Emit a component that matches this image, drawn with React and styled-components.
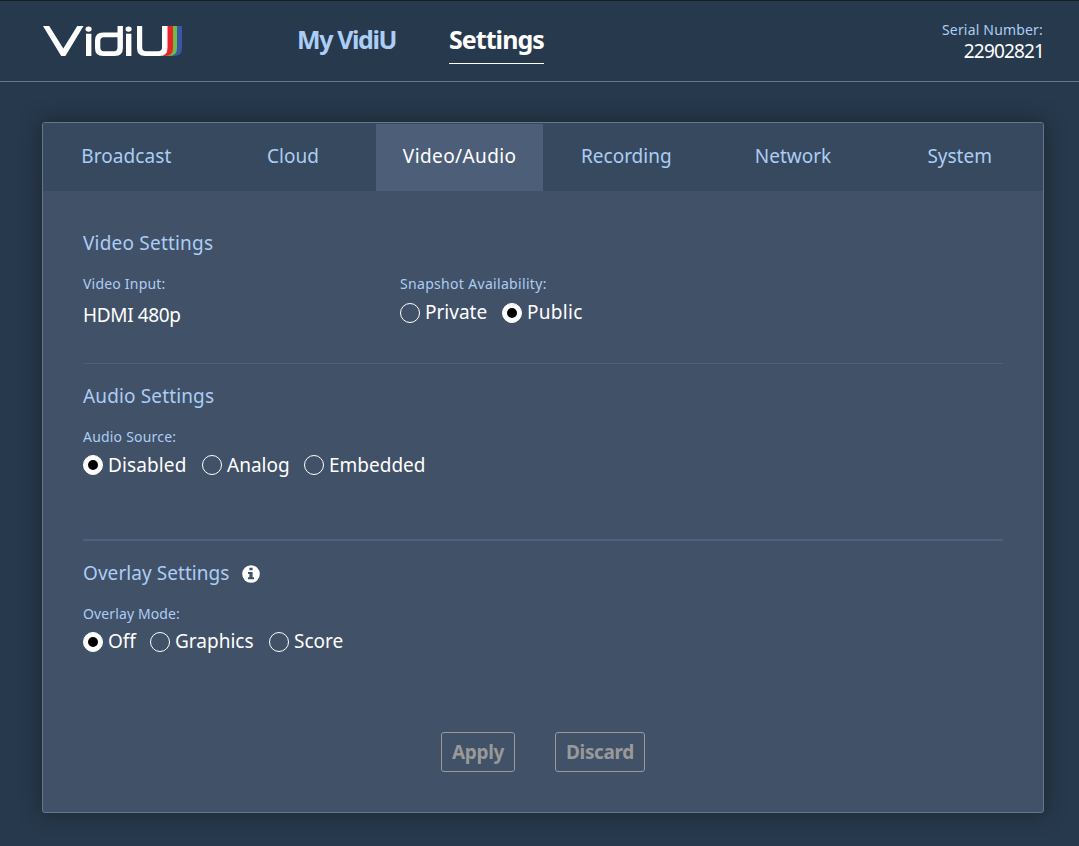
import React from 'react';
import styled, { createGlobalStyle } from 'styled-components';

const color = {
  page: '#27394d',
  line: '#66768c',
  link: '#accdf5',
  text: '#ffffff',
  panel: '#415167',
  tabs: '#37495e',
  tabActive: '#4d5f78',
  divider: '#4c6180',
  disabled: '#999999',
};

const GlobalStyle = createGlobalStyle`
  * { box-sizing: border-box; }
  body {
    margin: 0;
    background: ${color.page};
    color: ${color.text};
    font: 400 19px/30px "Noto Sans", "Open Sans", sans-serif;
  }
`;

const Page = styled.div`
  min-height: 846px;
  border-top: 1px solid #171c22;
  background: ${color.page};
`;

const Header = styled.header`
  display: flex;
  align-items: flex-start;
  height: 81px;
  padding: 0 36px 0 43px;
  border-bottom: 1px solid ${color.line};
`;

const Logo = styled.svg`
  display: block;
  width: 140px;
  height: 30px;
  margin-top: 25px;
`;

const MainNav = styled.nav`
  display: flex;
  gap: 53px;
  margin: 23px auto 0 114px;
`;

const NavLink = styled.a`
  width: ${(p) => p.$width}px;
  height: 40px;
  border-bottom: 1px solid ${(p) => (p.$active ? color.text : 'transparent')};
  color: ${(p) => (p.$active ? color.text : color.link)};
  font-size: 25px;
  font-weight: 700;
  line-height: 30px;
  letter-spacing: ${(p) => p.$track}px;
  white-space: nowrap;
`;

const Serial = styled.div`
  margin-top: 18px;
  text-align: right;
`;

const SerialLabel = styled.div`
  color: ${color.link};
  font-size: 14px;
  line-height: 21px;
  letter-spacing: 0.18px;
`;

const SerialValue = styled.div`
  margin-right: -1px;
  line-height: 23px;
  letter-spacing: -0.85px;
`;

const Panel = styled.main`
  width: 1002px;
  height: 691px;
  margin: 40px 0 0 42px;
  border: 1px solid ${color.line};
  border-radius: 3px;
  background: ${color.panel};
  box-shadow: 0 0 20px rgba(24, 31, 30, 0.75);
  overflow: hidden;
`;

const Tabs = styled.nav`
  display: grid;
  grid-template-columns: repeat(6, 1fr);
  height: 68px;
  padding-top: 1px;
  background: ${color.tabs};
`;

const Tab = styled.a`
  padding-bottom: 3px;
  background: ${(p) => (p.$active ? color.tabActive : 'transparent')};
  color: ${(p) => (p.$active ? color.text : color.link)};
  line-height: 64px;
  letter-spacing: ${(p) => p.$track || 0}px;
  text-align: center;
`;

const Body = styled.div`
  padding: 37px 40px 0;
`;

const Section = styled.section`
  height: ${(p) => p.$height}px;
  padding-top: ${(p) => p.$top || 0}px;
  border-bottom: ${(p) => p.$rule || 0}px solid ${color.divider};
`;

const SectionTitle = styled.h2`
  display: flex;
  align-items: center;
  gap: 12px;
  margin: 0 0 16px;
  color: ${color.link};
  font-size: 19px;
  font-weight: 400;
  line-height: 30px;
  letter-spacing: ${(p) => p.$track || 0.14}px;
`;

const InfoIcon = styled.svg`
  display: block;
  width: 18px;
  height: 18px;
  margin-top: 1px;
`;

const Fields = styled.div`
  display: grid;
  grid-template-columns: 317px 1fr;
`;

const Label = styled.div`
  color: ${color.link};
  font-size: 14px;
  line-height: 20px;
  letter-spacing: ${(p) => p.$track || 0.2}px;
`;

const Value = styled.div`
  margin-top: 6px;
  letter-spacing: -0.35px;
`;

const Options = styled.div`
  display: flex;
  gap: 15px;
  margin-top: ${(p) => p.$top || 8}px;
`;

const Option = styled.label`
  display: flex;
  gap: 5px;
  height: 20px;
  line-height: ${(p) => p.$line || 20}px;
`;

const Radio = styled.span`
  display: grid;
  place-items: center;
  width: 20px;
  height: 20px;
  border: 1px solid ${color.text};
  border-radius: 50%;
  background: ${(p) => (p.$checked ? color.text : 'transparent')};

  &::after {
    content: '';
    width: 10px;
    height: 10px;
    border-radius: 50%;
    background: ${(p) => (p.$checked ? '#000' : 'transparent')};
  }
`;

const OptionText = styled.span`
  width: ${(p) => p.$width}px;
  letter-spacing: ${(p) => p.$track || 0}px;
  white-space: nowrap;
`;

const Actions = styled.div`
  display: flex;
  justify-content: center;
  gap: 40px;
`;

const Button = styled.button`
  width: ${(p) => p.$width}px;
  height: 40px;
  padding: 0;
  border: 1px solid ${color.disabled};
  border-radius: 3px;
  background: transparent;
  color: ${color.disabled};
  font: 700 19px/38px "Noto Sans", "Open Sans", sans-serif;
  letter-spacing: -0.35px;
`;

const TABS = [
  { name: 'Broadcast', track: 0.08 },
  { name: 'Cloud' },
  { name: 'Video/Audio', track: 0.4, active: true },
  { name: 'Recording' },
  { name: 'Network' },
  { name: 'System' },
];

function RadioGroup({ options, value, top, line }) {
  return (
    <Options $top={top}>
      {options.map(([name, width, track]) => (
        <Option key={name} $line={line}>
          <Radio $checked={name === value} />
          <OptionText $width={width} $track={track}>{name}</OptionText>
        </Option>
      ))}
    </Options>
  );
}

function VidiULogo() {
  return (
    <Logo viewBox="43 26 140 30" aria-label="VidiU">
      <path d="M176 26h6v22q0 8-8 8h-5q7-2 7-9z" fill="#3a56a5" />
      <path d="M172 26h5v22q0 8-8 8h-5q8-2 8-9z" fill="#6cbd45" />
      <path d="M167 26h6v22q0 8-8 8h-6q8-2 8-9z" fill="#e8232a" />
      <path d="M162 26h5.500v22q0 8-8 8H145q-8 0-8-8V26h5.200v21.500q0 3.800 3.800 3.800h12.200q3.800 0 3.800-3.800z" fill="#fff" />
      <path d="M43 26h6.200L63.300 48.400 77.300 26h6.200L65.400 56h-4.200z" fill="#fff" />
      <path d="M86 33.800h5.400V56H86zM126 33.800h5.400V56H126z" fill="#fff" />
      <ellipse cx="88.6" cy="29.1" rx="3.1" ry="2.7" fill="#fff" />
      <ellipse cx="128.6" cy="29.1" rx="3.1" ry="2.7" fill="#fff" />
      <path d="M117.500 26h5.400v22q0 8-8 8H103q-8 0-8-8v-7.500q0-8 8-8h14.500zM117.500 37.200H104q-3.700 0-3.700 3.700v6.700q0 3.700 3.700 3.700h9.800q3.700 0 3.700-3.700z" fill="#fff" fillRule="evenodd" />
    </Logo>
  );
}

export default function App() {
  return (
    <>
      <GlobalStyle />
      <Page>
        <Header>
          <VidiULogo />
          <MainNav>
            <NavLink $width={99} $track={-1.4}>My VidiU</NavLink>
            <NavLink $width={95} $track={-0.95} $active>Settings</NavLink>
          </MainNav>
          <Serial>
            <SerialLabel>Serial Number:</SerialLabel>
            <SerialValue>22902821</SerialValue>
          </Serial>
        </Header>
        <Panel>
          <Tabs>
            {TABS.map((tab) => (
              <Tab key={tab.name} $active={tab.active} $track={tab.track}>{tab.name}</Tab>
            ))}
          </Tabs>
          <Body>
            <Section $height={136} $rule={1}>
              <SectionTitle $track={0.2}>Video Settings</SectionTitle>
              <Fields>
                <div>
                  <Label>Video Input:</Label>
                  <Value>HDMI 480p</Value>
                </div>
                <div>
                  <Label $track={0.32}>Snapshot Availability:</Label>
                  <RadioGroup options={[['Private', 62], ['Public', 55, 0.3]]} value="Public" top={9} line={18} />
                </div>
              </Fields>
            </Section>
            <Section $height={177} $top={17} $rule={2}>
              <SectionTitle>Audio Settings</SectionTitle>
              <Label>Audio Source:</Label>
              <RadioGroup options={[['Disabled', 79, 0.12], ['Analog', 62], ['Embedded', 97]]} value="Disabled" />
            </Section>
            <Section $height={191} $top={17}>
              <SectionTitle $track={0.06}>
                Overlay Settings
                <InfoIcon viewBox="0 0 18 18">
                  <circle cx="9" cy="9" r="8.8" fill="#fff" />
                  <path d="M7.400 2.700h3.200v2.600H7.400zM6 7h4.600v5.300H12v2H6v-2h1.400V9H6z" fill={color.panel} />
                </InfoIcon>
              </SectionTitle>
              <Label $track={0.12}>Overlay Mode:</Label>
              <RadioGroup options={[['Off', 27], ['Graphics', 79], ['Score', 50]]} value="Off" line={18} />
            </Section>
            <Actions>
              <Button $width={74}>Apply</Button>
              <Button $width={90}>Discard</Button>
            </Actions>
          </Body>
        </Panel>
      </Page>
    </>
  );
}
